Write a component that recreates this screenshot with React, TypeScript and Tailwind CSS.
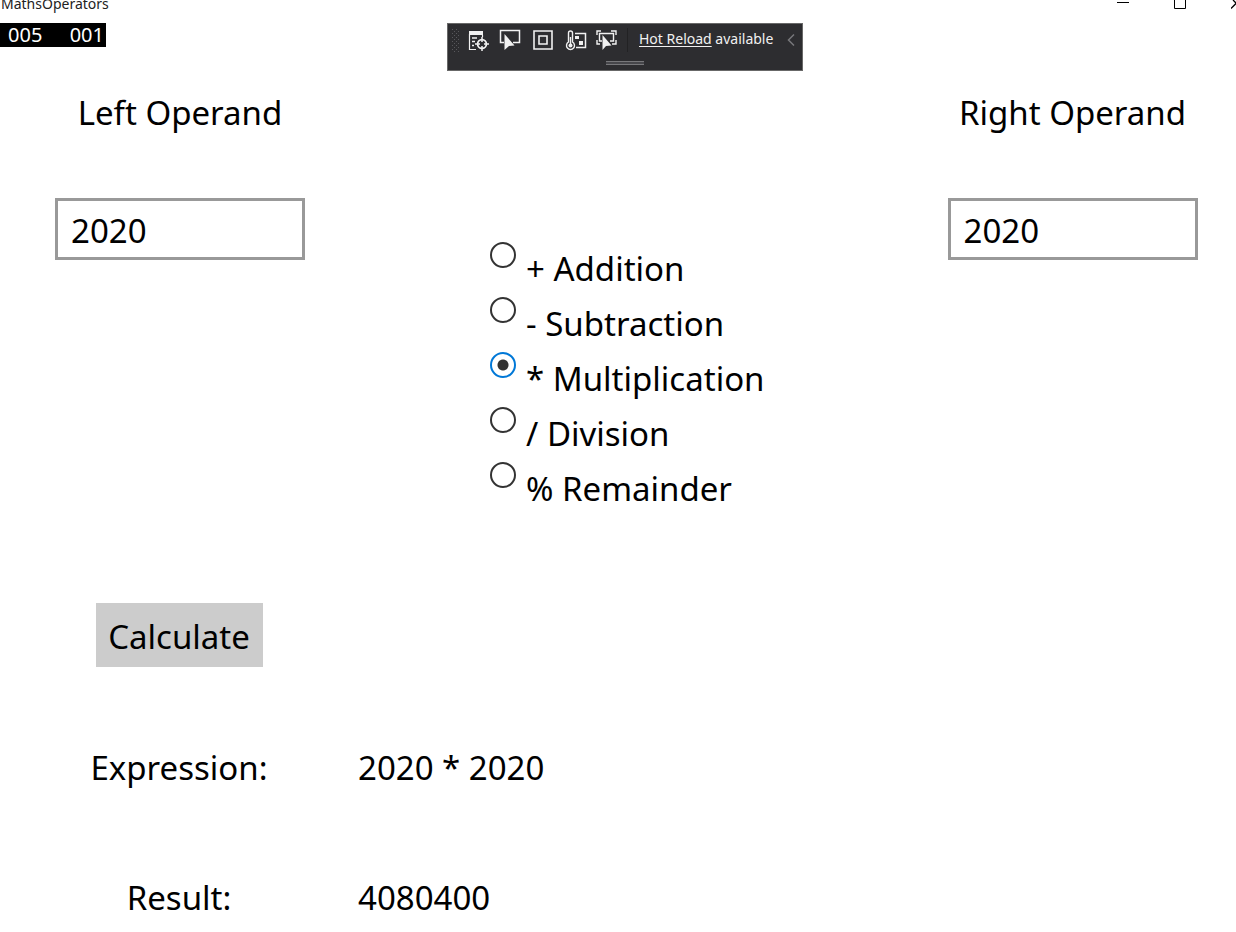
import { useState } from "react";

const operations = [
  { symbol: "+", name: "Addition" },
  { symbol: "-", name: "Subtraction" },
  { symbol: "*", name: "Multiplication" },
  { symbol: "/", name: "Division" },
  { symbol: "%", name: "Remainder" },
];

function compute(a: number, symbol: string, b: number): number {
  switch (symbol) {
    case "+":
      return a + b;
    case "-":
      return a - b;
    case "*":
      return a * b;
    case "/":
      return Math.trunc(a / b);
    default:
      return a % b;
  }
}

function TitleBar() {
  return (
    <header className="flex h-[23px] items-start justify-between overflow-hidden">
      <h1 className="-mt-[7px] pl-px text-[14px] leading-[22px] text-[#222]">MathsOperators</h1>
      <div className="flex">
        <button aria-label="Minimize" className="flex w-[57px] justify-center">
          <svg width="12" height="10" viewBox="0 0 12 10">
            <path d="M0 2.5H12" stroke="#000" fill="none" />
          </svg>
        </button>
        <button aria-label="Maximize" className="flex w-[57px] justify-center">
          <svg width="12" height="10" viewBox="0 0 12 10">
            <path d="M.5-3V8.5H11.5V-3" stroke="#000" fill="none" />
          </svg>
        </button>
        <button aria-label="Close" className="flex w-[28px] justify-end">
          <svg width="5" height="10" viewBox="0 0 5 10">
            <path d="M0 8.5L6 2.5M2 0L6 4" stroke="#000" fill="none" strokeWidth="1.3" />
          </svg>
        </button>
      </div>
    </header>
  );
}

function Toolbar() {
  return (
    <div className="absolute top-[23px] left-1/2 ml-[-171px] flex h-12 w-[356px] flex-col border border-[#686868] bg-[#2d2d30]">
      <div className="flex h-8 items-center">
        <svg width="16" height="32" viewBox="0 0 16 32" fill="#58585c">
          {[5, 9, 13, 17, 21, 25].map((y) => (
            <g key={y}>
              <rect x="4" y={y} width="1" height="1" />
              <rect x="8" y={y} width="1" height="1" />
              <rect x="6" y={y + 2} width="1" height="1" />
              <rect x="10" y={y + 2} width="1" height="1" />
            </g>
          ))}
        </svg>
        <button aria-label="Go to Live Visual Tree" className="ml-1 w-[22px]">
          <svg width="22" height="24" viewBox="0 0 22 24" fill="none" stroke="#f1f1f1">
            <path d="M1 3H15V7H1Z" fill="#f1f1f1" stroke="none" />
            <path d="M1.5 6V21.5H8M14.5 7V9" strokeWidth="1.2" />
            <path d="M4 10H9M4 13.5H7M4 17.5H6" strokeWidth="1.5" />
            <circle cx="14" cy="16" r="4.4" strokeWidth="1.8" />
            <path d="M14 9V14M14 18V23M7 16H12M16 16H21" strokeWidth="1.5" />
          </svg>
        </button>
        <button aria-label="Select element" className="ml-[9px] w-[22px]">
          <svg width="22" height="24" viewBox="0 0 22 24" fill="none" stroke="#f1f1f1">
            <path d="M5 14.5H1.500V2.500H20.500V14.500H14" strokeWidth="1.5" />
            <path d="M5.500 6V22L10 18L15.500 17.500Z" fill="#f1f1f1" stroke="none" />
          </svg>
        </button>
        <button aria-label="Display layout adorners" className="ml-[11px] w-[22px]">
          <svg width="22" height="24" viewBox="0 0 22 24" fill="none" stroke="#f1f1f1" strokeWidth="1.6">
            <path d="M2 3H20V21H2ZM7 8H15V16H7Z" />
          </svg>
        </button>
        <button aria-label="Track focused element" className="ml-[11px] w-[22px]">
          <svg width="22" height="24" viewBox="0 0 22 24" fill="none" stroke="#f1f1f1">
            <path d="M3.500 14V5a2 2 0 0 1 4 0V14a4 4 0 1 1-4 0Z" strokeWidth="1.4" />
            <path d="M5.500 9V17" strokeWidth="1.4" />
            <circle cx="5.500" cy="17.500" r="2" fill="#f1f1f1" stroke="none" />
            <path d="M10 5.500H20.500V19.500H11" strokeWidth="1.5" />
            <path d="M10 8H14V11H10ZM14 13H18V17H14Z" fill="#f1f1f1" stroke="none" />
          </svg>
        </button>
        <button aria-label="Scan for accessibility issues" className="ml-2 w-[22px]">
          <svg width="22" height="24" viewBox="0 0 22 24" fill="none" stroke="#f1f1f1" strokeWidth="1.4">
            <path d="M2 7V3H6M16 3H21V7M2 12V16H5M21 12V16H17" />
            <path d="M7 13H4.500V5.500H18.500V13H15" />
            <path d="M7.500 7V22L11 18L16.500 17.500Z" fill="#f1f1f1" stroke="none" />
          </svg>
        </button>
        <span className="ml-[10px] h-6 w-px bg-[#222224]" />
        <p className="ml-[11px] pb-1 text-[14px] whitespace-nowrap text-[#f1f1f1]">
          <a href="#reload" className="underline underline-offset-2">Hot Reload</a> available
        </p>
        <button aria-label="Collapse toolbar" className="mr-[7px] ml-auto">
          <svg width="8" height="12" viewBox="0 0 8 12">
            <path d="M7 .5L1.500 6L7 11.500" fill="none" stroke="#77777a" strokeWidth="1.5" />
          </svg>
        </button>
      </div>
      <div className="mt-[5px] h-1 w-[38px] self-center border-y border-[#77777a] bg-[#46464a]" />
    </div>
  );
}

function Operand({ id, label, value, onChange }: { id: string; label: string; value: string; onChange: (v: string) => void }) {
  return (
    <div className="flex flex-col items-center">
      <label htmlFor={id} className="leading-[48px]">{label}</label>
      <input
        id={id}
        value={value}
        onChange={(e) => onChange(e.target.value)}
        className="mt-[61px] h-[62px] w-[250px] border-3 border-[#999] bg-white px-[13px] pt-[2px] outline-none"
      />
    </div>
  );
}

export default function App() {
  const [left, setLeft] = useState("2020");
  const [right, setRight] = useState("2020");
  const [op, setOp] = useState("*");
  const [output, setOutput] = useState({ expression: "2020 * 2020", result: "4080400" });

  const calculate = () =>
    setOutput({
      expression: `${left} ${op} ${right}`,
      result: String(compute(Number(left), op, Number(right))),
    });

  return (
    <div className="relative overflow-hidden bg-white font-['Noto_Sans',sans-serif] text-black">
      <TitleBar />
      <div className="absolute top-[23px] left-0 flex h-6 w-[106px] items-center justify-between bg-black pr-[2px] pb-px pl-2 text-[20px] text-white">
        <span>005</span>
        <span>001</span>
      </div>
      <Toolbar />
      <main className="pt-[66px] text-[33px]">
        <div className="grid grid-cols-[360px_1fr_327px]">
          <Operand id="left" label="Left Operand" value={left} onChange={setLeft} />
          <fieldset aria-label="Operation" className="pt-[153px] pl-[130px]">
            {operations.map(({ symbol, name }) => (
              <label key={symbol} className="flex h-[55px] items-start gap-[10px]">
                <input
                  type="radio"
                  name="operation"
                  checked={op === symbol}
                  onChange={() => setOp(symbol)}
                  className="size-[26px] shrink-0 appearance-none rounded-full border-[2px] border-[#333] bg-white checked:border-[#0078d7] checked:bg-[radial-gradient(circle,#333_5px,transparent_6px)]"
                />
                <span className="pt-[3px] leading-[48px] whitespace-nowrap">
                  {symbol} {name}
                </span>
              </label>
            ))}
          </fieldset>
          <Operand id="right" label="Right Operand" value={right} onChange={setRight} />
        </div>
        <div className="mt-[86px] grid grid-cols-[358px_1fr] justify-items-center">
          <button onClick={calculate} className="h-16 w-[167px] bg-[#ccc] pt-1">Calculate</button>
          <span />
          <span className="mt-[77px] leading-[48px]">Expression:</span>
          <output className="mt-[77px] justify-self-start leading-[48px]">{output.expression}</output>
          <span className="mt-[82px] leading-[48px]">Result:</span>
          <output className="mt-[82px] justify-self-start leading-[48px]">{output.result}</output>
        </div>
      </main>
    </div>
  );
}
